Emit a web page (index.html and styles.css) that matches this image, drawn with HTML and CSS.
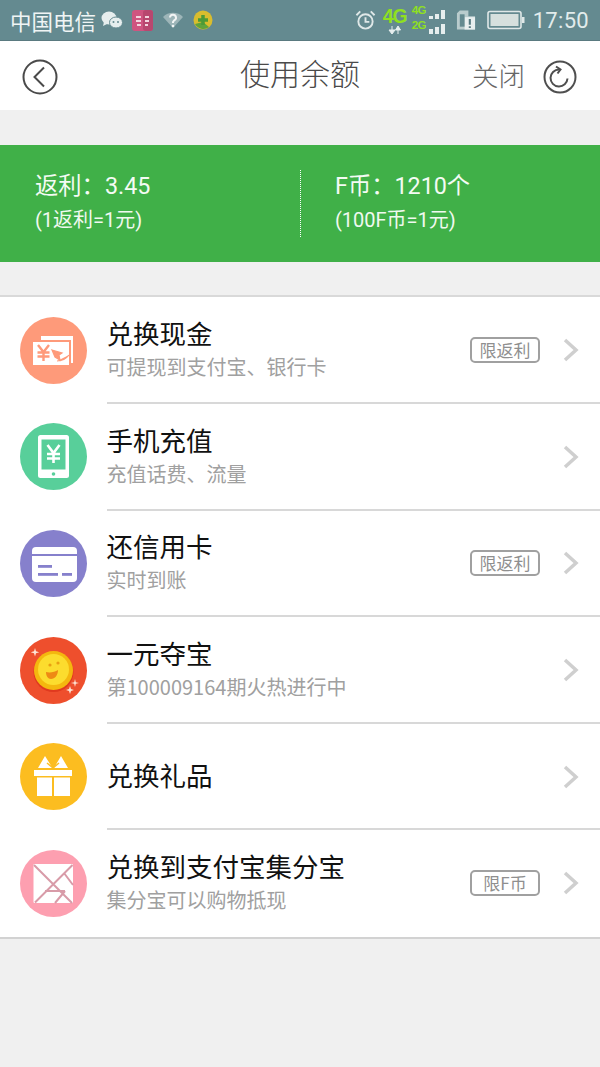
FILE: index.html
```html
<!DOCTYPE html>
<html lang="zh-CN">
<head>
<meta charset="utf-8">
<title>使用余额</title>
<link rel="stylesheet" href="styles.css">
</head>
<body>
<div class="page">
  <div class="status">
    <div class="status-side">
      <span class="carrier">中国电信</span>
      <svg class="si" width="22" height="20" viewBox="0 0 22 20"><ellipse cx="8" cy="8" rx="7.5" ry="6.5" fill="#e6eeee"/><path d="M3 12l-1 4 4-2z" fill="#e6eeee"/><ellipse cx="15" cy="12.500" rx="6.500" ry="5.500" fill="#e6eeee" stroke="#648a90"/><circle cx="12.500" cy="12" r="1" fill="#648a90"/><circle cx="17" cy="12" r="1" fill="#648a90"/></svg>
      <svg class="si gap-a" width="21" height="21" viewBox="0 0 21 21"><rect width="21" height="21" rx="3" fill="#cf5480"/><rect x="11" width="10" height="21" rx="3" fill="#b8476f"/><path d="M4 7h5M13 7h4M4 11h5M13 11h4M5 15h4M13 15h3" stroke="#f3d5df" stroke-width="2"/></svg>
      <svg class="si gap-b" width="22" height="20" viewBox="0 0 22 20"><path d="M1 7a14 14 0 0 1 20 0l-10 11z" fill="#9db5b8"/><path d="M8 7.500a3 3 0 1 1 4 3l-1 1.500v1" fill="none" stroke="#f2f5f5" stroke-width="2"/><circle cx="11" cy="16" r="1.300" fill="#f2f5f5"/></svg>
      <svg class="si gap-f" width="20" height="20" viewBox="0 0 20 20"><circle cx="10" cy="10" r="9.500" fill="#d9bd2e"/><path d="M2 14a9.500 9.500 0 0 0 14 3l-6-5z" fill="#5fa33c"/><path d="M10 5v10M5 10h10" stroke="#4c9a36" stroke-width="3.500"/></svg>
    </div>
    <div class="status-side">
      <svg class="si" width="21" height="22" viewBox="0 0 22 22"><circle cx="11" cy="12.500" r="7.500" fill="none" stroke="#dfe8e8" stroke-width="2"/><path d="M11 8v5h4" fill="none" stroke="#dfe8e8" stroke-width="2"/><path d="M1.500 6l4-4M20.500 6l-4-4" stroke="#dfe8e8" stroke-width="2"/></svg>
      <div class="net gap-c">
        <span class="net-main">4G</span>
        <svg class="arrows" width="14" height="8" viewBox="0 0 14 8"><path d="M4 0v4M1 4h6L4 8zM10 8V4M7.500 4h5L10 0z" fill="#e6eeee" stroke="#e6eeee"/></svg>
      </div>
      <div class="net-dual">
        <div class="sig-line"><span class="net-small">4G</span><span class="bars"><i class="t1"></i><i class="t2"></i><i class="t3"></i></span></div>
        <div class="sig-line"><span class="net-small">2G</span><span class="bars"><i class="b1"></i><i class="b2"></i><i class="b3"></i></span></div>
      </div>
      <svg class="si gap-d" width="20" height="22" viewBox="0 0 21 22"><path d="M1 4l3-3h9v6h7v14H1z" fill="#b9cccd"/><rect x="9" y="8" width="11" height="13" fill="#e8efef"/><path d="M14.500 10v6M14.500 17.500v2" stroke="#567a80" stroke-width="2.200"/><rect x="4" y="5" width="5" height="13" fill="#648a90"/></svg>
      <svg class="si gap-d" width="38" height="20" viewBox="0 0 38 20"><rect x="1" y="1.500" width="33" height="17" rx="2" fill="none" stroke="#dfe8e8" stroke-width="1.600"/><rect x="3.500" y="4" width="28" height="12" fill="#d6e0de"/><rect x="35" y="7" width="2.500" height="6" fill="#dfe8e8"/></svg>
      <span class="clock">17:50</span>
    </div>
  </div>

  <header class="topbar">
    <button class="round-btn" aria-label="返回">
      <svg width="36" height="36" viewBox="0 0 36 36"><circle cx="18" cy="18" r="16.500" fill="none" stroke="#4a4a4a" stroke-width="2"/><path d="M22 8.500 12.500 18l9.500 9.500" fill="none" stroke="#4a4a4a" stroke-width="2"/></svg>
    </button>
    <h1 class="page-title">使用余额</h1>
    <div class="top-actions">
      <span class="close-text">关闭</span>
      <svg width="34" height="34" viewBox="0 0 34 34"><circle cx="17" cy="17" r="15.500" fill="none" stroke="#4f4f4f" stroke-width="2"/><path d="M16 9.500a8.500 8.500 0 1 0 8.500 9" fill="none" stroke="#4f4f4f" stroke-width="2"/><path d="M13 6.500l4.500 3-3 4" fill="none" stroke="#4f4f4f" stroke-width="2"/></svg>
    </div>
  </header>

  <section class="balance">
    <div class="bal-col">
      <div class="bal-main">返利：3.45</div>
      <div class="bal-sub">(1返利=1元)</div>
    </div>
    <div class="bal-col bal-col-right">
      <div class="bal-main">F币：1210个</div>
      <div class="bal-sub">(100F币=1元)</div>
    </div>
  </section>

  <section class="list">
    <div class="row">
      <svg class="ico" viewBox="0 0 67 67"><circle cx="33.500" cy="33.500" r="33.500" fill="#fe9a7a"/><rect x="21" y="19" width="32" height="27" fill="#fff"/><rect x="11" y="23" width="40" height="27" fill="#fe9a7a"/><rect x="13" y="25" width="36" height="23" fill="#fff"/><path d="M18 28l5.500 7 5.500-7M17.500 35.500h12M17.500 39.500h12M23.500 35v9" fill="none" stroke="#fe9a7a" stroke-width="2.400"/><path d="M32 33l10 3-3 2 1 5-5-3z M37 44c5 0 9-2 12-6" fill="#fe9a7a" stroke="#fe9a7a" stroke-width="1.200"/></svg>
      <div class="copy"><div class="name">兑换现金</div><div class="desc">可提现到支付宝、银行卡</div></div>
      <span class="tag">限返利</span>
      <svg class="chev" viewBox="0 0 16 24"><path d="M2 2l11 10L2 22" fill="none" stroke="#cfcfcf" stroke-width="3.500"/></svg>
    </div>
    <div class="row">
      <svg class="ico" viewBox="0 0 67 67"><circle cx="33.500" cy="33.500" r="33.500" fill="#58cf9a"/><rect x="18" y="12" width="31" height="43" rx="2.500" fill="#fff"/><rect x="21.500" y="16.500" width="24" height="30" fill="#58cf9a"/><circle cx="33.500" cy="51" r="1.800" fill="#58cf9a"/><path d="M27.500 22l6 8 6-8M27 31h13M27 35.500h13M33.500 30v10" fill="none" stroke="#fff" stroke-width="2.600"/></svg>
      <div class="copy"><div class="name">手机充值</div><div class="desc">充值话费、流量</div></div>
      <svg class="chev" viewBox="0 0 16 24"><path d="M2 2l11 10L2 22" fill="none" stroke="#cfcfcf" stroke-width="3.500"/></svg>
    </div>
    <div class="row">
      <svg class="ico" viewBox="0 0 67 67"><circle cx="33.500" cy="33.500" r="33.500" fill="#8680cc"/><rect x="12" y="17" width="45" height="35" rx="4" fill="#fff"/><rect x="12" y="24" width="45" height="2" fill="#8680cc"/><rect x="18" y="35" width="14" height="2.800" fill="#8680cc"/><rect x="18" y="43" width="20" height="2.800" fill="#8680cc"/><rect x="42" y="43" width="10" height="2.800" fill="#8680cc"/></svg>
      <div class="copy"><div class="name">还信用卡</div><div class="desc">实时到账</div></div>
      <span class="tag">限返利</span>
      <svg class="chev" viewBox="0 0 16 24"><path d="M2 2l11 10L2 22" fill="none" stroke="#cfcfcf" stroke-width="3.500"/></svg>
    </div>
    <div class="row">
      <svg class="ico" viewBox="0 0 67 67"><circle cx="33.500" cy="33.500" r="33.500" fill="#ee4f2d"/><circle cx="33.500" cy="35" r="20" fill="#e0391f"/><circle cx="33.500" cy="33.500" r="19.500" fill="#f4b70f"/><circle cx="33.500" cy="32.500" r="15.500" fill="#fcdc2e"/><circle cx="30" cy="28" r="1.600" fill="#e8a012"/><circle cx="38" cy="26" r="1.600" fill="#e8a012"/><path d="M26 35c4 1 9 0 12-2 0 5-3 9-7 9-3 0-5-3-5-7z" fill="#ee8a14"/><path d="M15 11l1 3.300 3.300 1-3.300 1-1 3.300-1-3.300-3.300-1 3.300-1zM55 42l.8 3.200 3.200.8-3.200.8-.8 3.200-.8-3.200-3.200-.8 3.200-.8zM50 49l1 3 3 1-3 1-1 3-1-3-3-1 3-1z" fill="#fde3d4"/></svg>
      <div class="copy"><div class="name">一元夺宝</div><div class="desc">第100009164期火热进行中</div></div>
      <svg class="chev" viewBox="0 0 16 24"><path d="M2 2l11 10L2 22" fill="none" stroke="#cfcfcf" stroke-width="3.500"/></svg>
    </div>
    <div class="row">
      <svg class="ico" viewBox="0 0 67 67"><circle cx="33.500" cy="33.500" r="33.500" fill="#fcbd20"/><path d="M18 25l7-12 7.500 12zM34 25l7-12 7 12z" fill="#fff"/><path d="M33 25l-6-5M33 25l6-5" stroke="#fcbd20" stroke-width="1.500"/><rect x="14" y="27" width="38" height="6" fill="#fff"/><rect x="17" y="34.500" width="15" height="18.500" fill="#fff"/><rect x="34" y="34.500" width="16" height="18.500" fill="#fff"/></svg>
      <div class="copy"><div class="name">兑换礼品</div></div>
      <svg class="chev" viewBox="0 0 16 24"><path d="M2 2l11 10L2 22" fill="none" stroke="#cfcfcf" stroke-width="3.500"/></svg>
    </div>
    <div class="row">
      <svg class="ico" viewBox="0 0 67 67"><circle cx="33.500" cy="33.500" r="33.500" fill="#fd9fb0"/><rect x="13.500" y="14" width="39.500" height="39" rx="1" fill="#fff"/><path d="M14 15l38 38M52.500 15L15 52.500M44 23l9 12M25 41h20M45 41l-10 12" fill="none" stroke="#d89ba8" stroke-width="2"/></svg>
      <div class="copy"><div class="name">兑换到支付宝集分宝</div><div class="desc">集分宝可以购物抵现</div></div>
      <span class="tag">限F币</span>
      <svg class="chev" viewBox="0 0 16 24"><path d="M2 2l11 10L2 22" fill="none" stroke="#cfcfcf" stroke-width="3.500"/></svg>
    </div>
  </section>
</div>
</body>
</html>
```

FILE: styles.css
```css
* { box-sizing: border-box; }
html, body { margin: 0; padding: 0; }
body {
  background: #f0f0f0;
  font-family: Roboto, "Noto Sans CJK SC", sans-serif;
  width: 600px;
  height: 1067px;
  overflow: hidden;
}
.page { display: flex; flex-direction: column; height: 1067px; }

.status {
  height: 41px;
  background: #648a90;
  border-bottom: 1px solid #5a7a80;
  display: flex;
  justify-content: space-between;
  align-items: center;
  padding: 0 11px 0 10px;
  color: #f0f5f5;
}
.status-side { display: flex; align-items: center; }
.carrier { font-size: 21.500px; line-height: 41px; font-family: "Noto Sans CJK SC", sans-serif; margin-right: 5px; }
.si { display: block; flex: none; }
.gap-a { margin-left: 9px; }
.gap-b { margin-left: 9px; }
.gap-f { margin-left: 9px; }
.gap-c { margin-left: 8px; }
.gap-d { margin-left: 11px; }
.net { display: flex; flex-direction: column; align-items: center; width: 22px; color: #8fe01f; }
.net-main { font-size: 19.500px; font-weight: 700; line-height: 18px; letter-spacing: -1px; font-family: "Liberation Sans", sans-serif; white-space: nowrap; }
.arrows { display: block; margin-top: 1px; }
.net-dual { display: flex; flex-direction: column; gap: 0; margin-left: 6px; margin-bottom: 2px; }
.sig-line { display: flex; align-items: flex-end; height: 15px; }
.net-small { font-size: 11.500px; font-weight: 700; color: #8fe01f; line-height: 12px; width: 17px; font-family: "Liberation Sans", sans-serif; letter-spacing: -.5px; margin-bottom: 3px; }
.bars { display: flex; align-items: flex-end; gap: 2px; }
.bars i { display: block; width: 4px; background: #e6eeee; }
.t1 { height: 3px; }
.t2 { height: 5px; }
.t3 { height: 9px; }
.b1 { height: 5px; }
.b2 { height: 7px; }
.b3 { height: 10px; }
.clock { font-size: 22px; line-height: 41px; margin-left: 8px; color: #e2ecec; letter-spacing: .3px; }

.topbar {
  height: 69px;
  background: #fff;
  display: flex;
  align-items: center;
  position: relative;
  padding: 0 22px;
  justify-content: space-between;
}
.round-btn { border: 0; background: none; padding: 0; width: 36px; height: 36px; display: block; margin-top: 3px; }
.round-btn svg { display: block; }
.page-title {
  position: absolute;
  left: 0;
  right: 0;
  top: 9px;
  margin: 0;
  text-align: center;
  font-size: 30px;
  line-height: 44px;
  font-weight: 300;
  color: #4a4a4a;
  font-family: "Noto Sans CJK SC", sans-serif;
}
.top-actions { display: flex; align-items: center; gap: 18px; margin-top: 3px; margin-right: 1px; }
.top-actions svg { display: block; }
.close-text { font-size: 26.500px; line-height: 34px; font-weight: 300; color: #666; font-family: "Noto Sans CJK SC", sans-serif; position: relative; top: -2px; }

.balance {
  margin-top: 35px;
  height: 117px;
  background: #40b048;
  color: #fff;
  display: flex;
  align-items: center;
}
.bal-col { width: 300px; padding-left: 35px; height: 67px; }
.bal-col-right { border-left: 1px dotted #fff; padding-left: 34px; }
.bal-main { font-size: 23.300px; line-height: 28px; margin-top: 2px; color: #f4fbf4; white-space: nowrap; }
.bal-sub { font-size: 20px; line-height: 26px; margin-top: 7px; color: #f0f9f0; white-space: nowrap; }

.list {
  margin-top: 33px;
  background: #fff;
  border-top: 2px solid #d9d9d9;
  border-bottom: 2px solid #d2d2d2;
}
.row {
  height: 106.600px;
  display: flex;
  align-items: center;
  padding: 0 20px;
  position: relative;
}
.row + .row::before {
  content: "";
  position: absolute;
  left: 107px;
  right: 0;
  top: -1.600px;
  height: 2px;
  background: #d8d8d8;
}
.ico { width: 67px; height: 67px; display: block; flex: none; margin-right: 19.500px; }
.copy { flex: 1; min-width: 0; padding-bottom: 4px; font-family: "Noto Sans CJK SC", sans-serif; }
.name { font-size: 26.500px; line-height: 34px; color: #111; }
.desc { font-size: 20px; line-height: 26px; color: #a0a0a0; margin-top: 4px; }
.tag {
  width: 70px;
  height: 26px;
  border: 2px solid #a0a0a0;
  border-radius: 5px;
  font-size: 17px;
  line-height: 22px;
  text-align: center;
  color: #8f8f8f;
  font-family: "Noto Sans CJK SC", sans-serif;
  flex: none;
}
.chev { width: 16px; height: 24px; display: block; flex: none; margin-left: 23px; margin-right: 1px; }
.row:not(:has(.tag)) .chev { margin-left: 0; }
```
